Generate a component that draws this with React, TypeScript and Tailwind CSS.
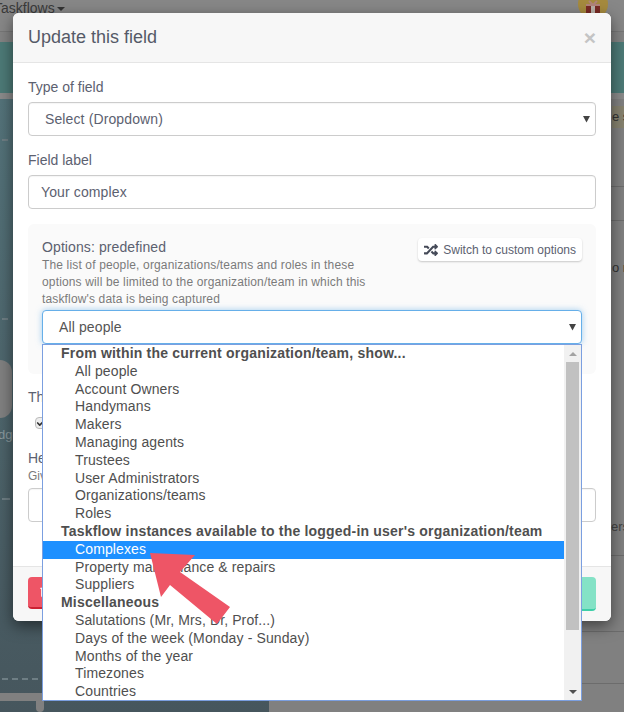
import { Trash2, Check } from 'lucide-react';
import { FaRandom } from 'react-icons/fa';

const groups = [
  {
    title: 'From within the current organization/team, show...',
    items: ['All people', 'Account Owners', 'Handymans', 'Makers', 'Managing agents', 'Trustees', 'User Administrators', 'Organizations/teams', 'Roles'],
  },
  {
    title: "Taskflow instances available to the logged-in user's organization/team",
    items: ['Complexes', 'Property maintenance & repairs', 'Suppliers'],
  },
  {
    title: 'Miscellaneous',
    items: ['Salutations (Mr, Mrs, Dr, Prof...)', 'Days of the week (Monday - Sunday)', 'Months of the year', 'Timezones', 'Countries'],
  },
];

function Caret() {
  return (
    <svg width="7" height="8" viewBox="0 0 7 8" className="absolute right-[5px] top-[12px]">
      <path d="M0 1H7L3.5 7.5Z" fill="#444" />
    </svg>
  );
}

function Background() {
  return (
    <div className="absolute inset-0 flex flex-col bg-[#808080]">
      <div className="h-[32px] bg-[#878787] border-b border-[#777] text-[14px] text-[#3a3a3a] -indent-[6px] leading-[17px]">
        <span>Taskflows</span>
        <span className="inline-block ml-[2px] mb-[2px] border-x-[4px] border-t-[4px] border-x-transparent border-t-[#333]" />
      </div>
      <div className="h-[10px] bg-[#838383]" />
      <div className="h-[51px] bg-[#4d7a77]" />
      <div className="h-[6px] bg-[#8a8a8a]" />
      <div className="flex-1 flex">
        <div className="w-[269px] bg-gradient-to-b from-[#54737a] to-[#46565d]" />
        <div className="flex-1" />
      </div>
      {/* bits of the page that show round the modal */}
      <div className="absolute left-0 top-[360px] w-[12px] h-[58px] rounded-r-full bg-[#808080]" />
      <div className="absolute left-0 top-[428px] text-[13px] leading-[14px] text-[#8a9a9e] -indent-[2px] w-[13px] overflow-hidden">dge</div>
      <div className="absolute left-[2px] top-[139px] w-[6px] border-t-2 border-[#6e7e84]" />
      <div className="absolute left-[2px] top-[318px] w-[6px] border-t-2 border-[#6e7e84]" />
      <div className="absolute left-[2px] top-[498px] w-[8px] border-t-2 border-[#6e7e84]" />
      <div className="absolute left-[2px] top-[678px] w-[36px] border-t-2 border-dashed border-[#6e7e84]" />
      <div className="absolute left-0 top-[693px] w-[42px] h-[8px] bg-[#808080]" />
      <div className="absolute left-[36px] top-[693px] w-[8px] h-[19px] rounded-b bg-[#808080]" />
      <div className="absolute left-[612px] top-[106px] w-[12px] h-[22px] bg-[#86826f] text-[13px] leading-[22px] text-[#333] overflow-hidden whitespace-nowrap">e s</div>
      <div className="absolute left-[612px] top-[260px] text-[13px] leading-[16px] text-[#333] whitespace-nowrap">o r</div>
      <div className="absolute left-[611px] top-[519px] text-[13px] leading-[16px] text-[#444] whitespace-nowrap">ers</div>
      <div className="absolute left-[611px] right-0 top-[186px] border-t border-[#6c6c6c]" />
      <div className="absolute left-[611px] right-0 top-[220px] border-t border-[#6c6c6c]" />
      <div className="absolute left-[611px] right-0 top-[555px] border-t border-[#6c6c6c]" />
      <div className="absolute left-[582px] right-0 top-[631px] border-t border-[#6c6c6c]" />
      <div className="absolute left-[582px] right-0 top-[683px] border-t border-[#6c6c6c]" />
      <svg width="34" height="16" viewBox="0 0 34 16" className="absolute left-[576px] top-0">
        <circle cx="17" cy="4" r="15" fill="#a58a3e" />
        <rect x="10" y="6" width="14" height="10" fill="#7a2a24" />
        <rect x="15" y="6" width="4" height="10" fill="#b9b0a8" />
        <path d="M10 5h14M13 1l4 4l4-4" stroke="#b0837a" strokeWidth="2" fill="none" />
      </svg>
    </div>
  );
}

function OptionsList() {
  return (
    <div className="absolute z-10 left-0 top-[34px] w-[540px] h-[357px] flex bg-white border border-[#7b9fe0] text-[14px] text-[#4f4f4f]">
      <div className="flex-1 overflow-hidden">
        {groups.map((g) => (
          <div key={g.title}>
            <div className="h-[17.8px] leading-[17.8px] pl-[18px] font-bold tracking-[0.2px] whitespace-nowrap">{g.title}</div>
            {g.items.map((item) => (
              <div
                key={item}
                className={
                  item === 'Complexes'
                    ? 'h-[17.8px] leading-[17.8px] pl-[32px] tracking-[0.12px] bg-[#1e90ff] text-white'
                    : 'h-[17.8px] leading-[17.8px] pl-[32px] tracking-[0.12px]'
                }
              >
                {item}
              </div>
            ))}
          </div>
        ))}
      </div>
      <div className="w-[17px] bg-[#f1f1f1] flex flex-col items-center">
        <div className="h-[17px] flex items-center justify-center">
          <span className="border-x-[4px] border-b-[4px] border-x-transparent border-b-[#a3a3a3]" />
        </div>
        <div className="w-[13px] h-[268px] bg-[#c1c1c1]" />
        <div className="flex-1" />
        <div className="h-[17px] flex items-center justify-center">
          <span className="border-x-[4px] border-t-[4px] border-x-transparent border-t-[#505050]" />
        </div>
      </div>
    </div>
  );
}

function Modal() {
  const input = 'relative h-[34px] rounded border border-[#ccc] bg-white leading-[32px] tracking-[0.12px] shadow-[inset_0_1px_1px_rgba(0,0,0,0.04)]';
  return (
    <div className="absolute left-[13px] top-[13px] w-[598px] h-[608px] rounded-md bg-white flex flex-col shadow-[0_5px_15px_rgba(0,0,0,0.5)] text-[14px] text-[#5c6170]">
      <div className="h-[50px] shrink-0 rounded-t-md bg-[#f7f7f7] border-b border-[#e5e5e5] px-[15px] flex items-center justify-between">
        <span className="text-[18px] text-[#555a68]">Update this field</span>
        <span className="text-[21px] font-bold text-[#c4c4c4] leading-none">×</span>
      </div>
      <div className="flex-1 px-[15px] pt-[14px]">
        <div className="h-[20px] leading-[20px] mb-[5px]">Type of field</div>
        <div className={input + ' pl-[16px]'}>
          Select (Dropdown)
          <Caret />
        </div>
        <div className="h-[20px] leading-[20px] mt-[14px] mb-[5px]">Field label</div>
        <div className={input + ' pl-[12px]'}>Your complex</div>
        <div className="mt-[15px] h-[150px] rounded-md bg-[#fafafa] px-[14px] pt-[14px] relative">
          <div className="flex justify-between">
            <div className="w-[340px]">
              <div className="h-[19px] leading-[19px] tracking-[0.1px]">Options: predefined</div>
              <p className="text-[12px] leading-[17px] tracking-[0.15px] text-[#7a7a7a]">
                The list of people, organizations/teams and roles in these options will be limited to the organization/team in which this taskflow's data is being captured
              </p>
            </div>
            <div className="h-[23px] flex items-center gap-[5px] self-start bg-white rounded-sm pl-[6px] pr-[6px] text-[12px] text-[#5c6170] shadow-[0_1px_2px_rgba(0,0,0,0.2)]">
              <FaRandom size={14} className="text-[#454a58]" />
              Switch to custom options
            </div>
          </div>
          <div className="relative mt-[2px]">
            <div className="relative h-[34px] rounded border border-[#66afe9] bg-white pl-[16px] leading-[32px] tracking-[0.12px] text-[#555] shadow-[0_0_6px_rgba(102,175,233,0.6)]">
              All people
              <Caret />
            </div>
            <OptionsList />
          </div>
        </div>
        <div className="h-[20px] leading-[20px] mt-[13px]">The</div>
        <div className="mt-[10px] ml-[7px] w-[12px] h-[12px] rounded-sm border border-[#bbb] bg-[#eee] flex items-center justify-center">
          <Check size={10} strokeWidth={4} className="text-[#333]" />
        </div>
        <div className="h-[20px] leading-[20px] mt-[19px]">Help</div>
        <div className="h-[16px] leading-[16px] text-[12px] text-[#7a7a7a]">Give</div>
        <div className={input + ' mt-[4px]'} />
      </div>
      <div className="h-[55px] shrink-0 rounded-b-md bg-[#f7f7f7] border-t border-[#e5e5e5] px-[15px] pt-[10px] flex justify-between">
        <div className="w-[60px] h-[32px] rounded bg-[#ee5566] border-b-2 border-[#cc2233] pl-[11px] pt-[8px]">
          <Trash2 size={13} className="text-white" />
        </div>
        <div className="w-[60px] h-[34px] rounded bg-[#84e2c6] border-b-2 border-[#3ecfa8]" />
      </div>
    </div>
  );
}

export default function App() {
  return (
    <div className="relative w-[624px] h-[712px] overflow-hidden font-['Liberation_Sans',Arial,sans-serif]">
      <Background />
      <Modal />
      {/* red annotation arrow */}
      <svg width="624" height="712" viewBox="0 0 624 712" className="absolute inset-0 z-20 pointer-events-none">
        <path d="M150 553L195 555L180 572L230 607L217 624L170 585L161 597Z" fill="#ee5566" />
      </svg>
    </div>
  );
}
